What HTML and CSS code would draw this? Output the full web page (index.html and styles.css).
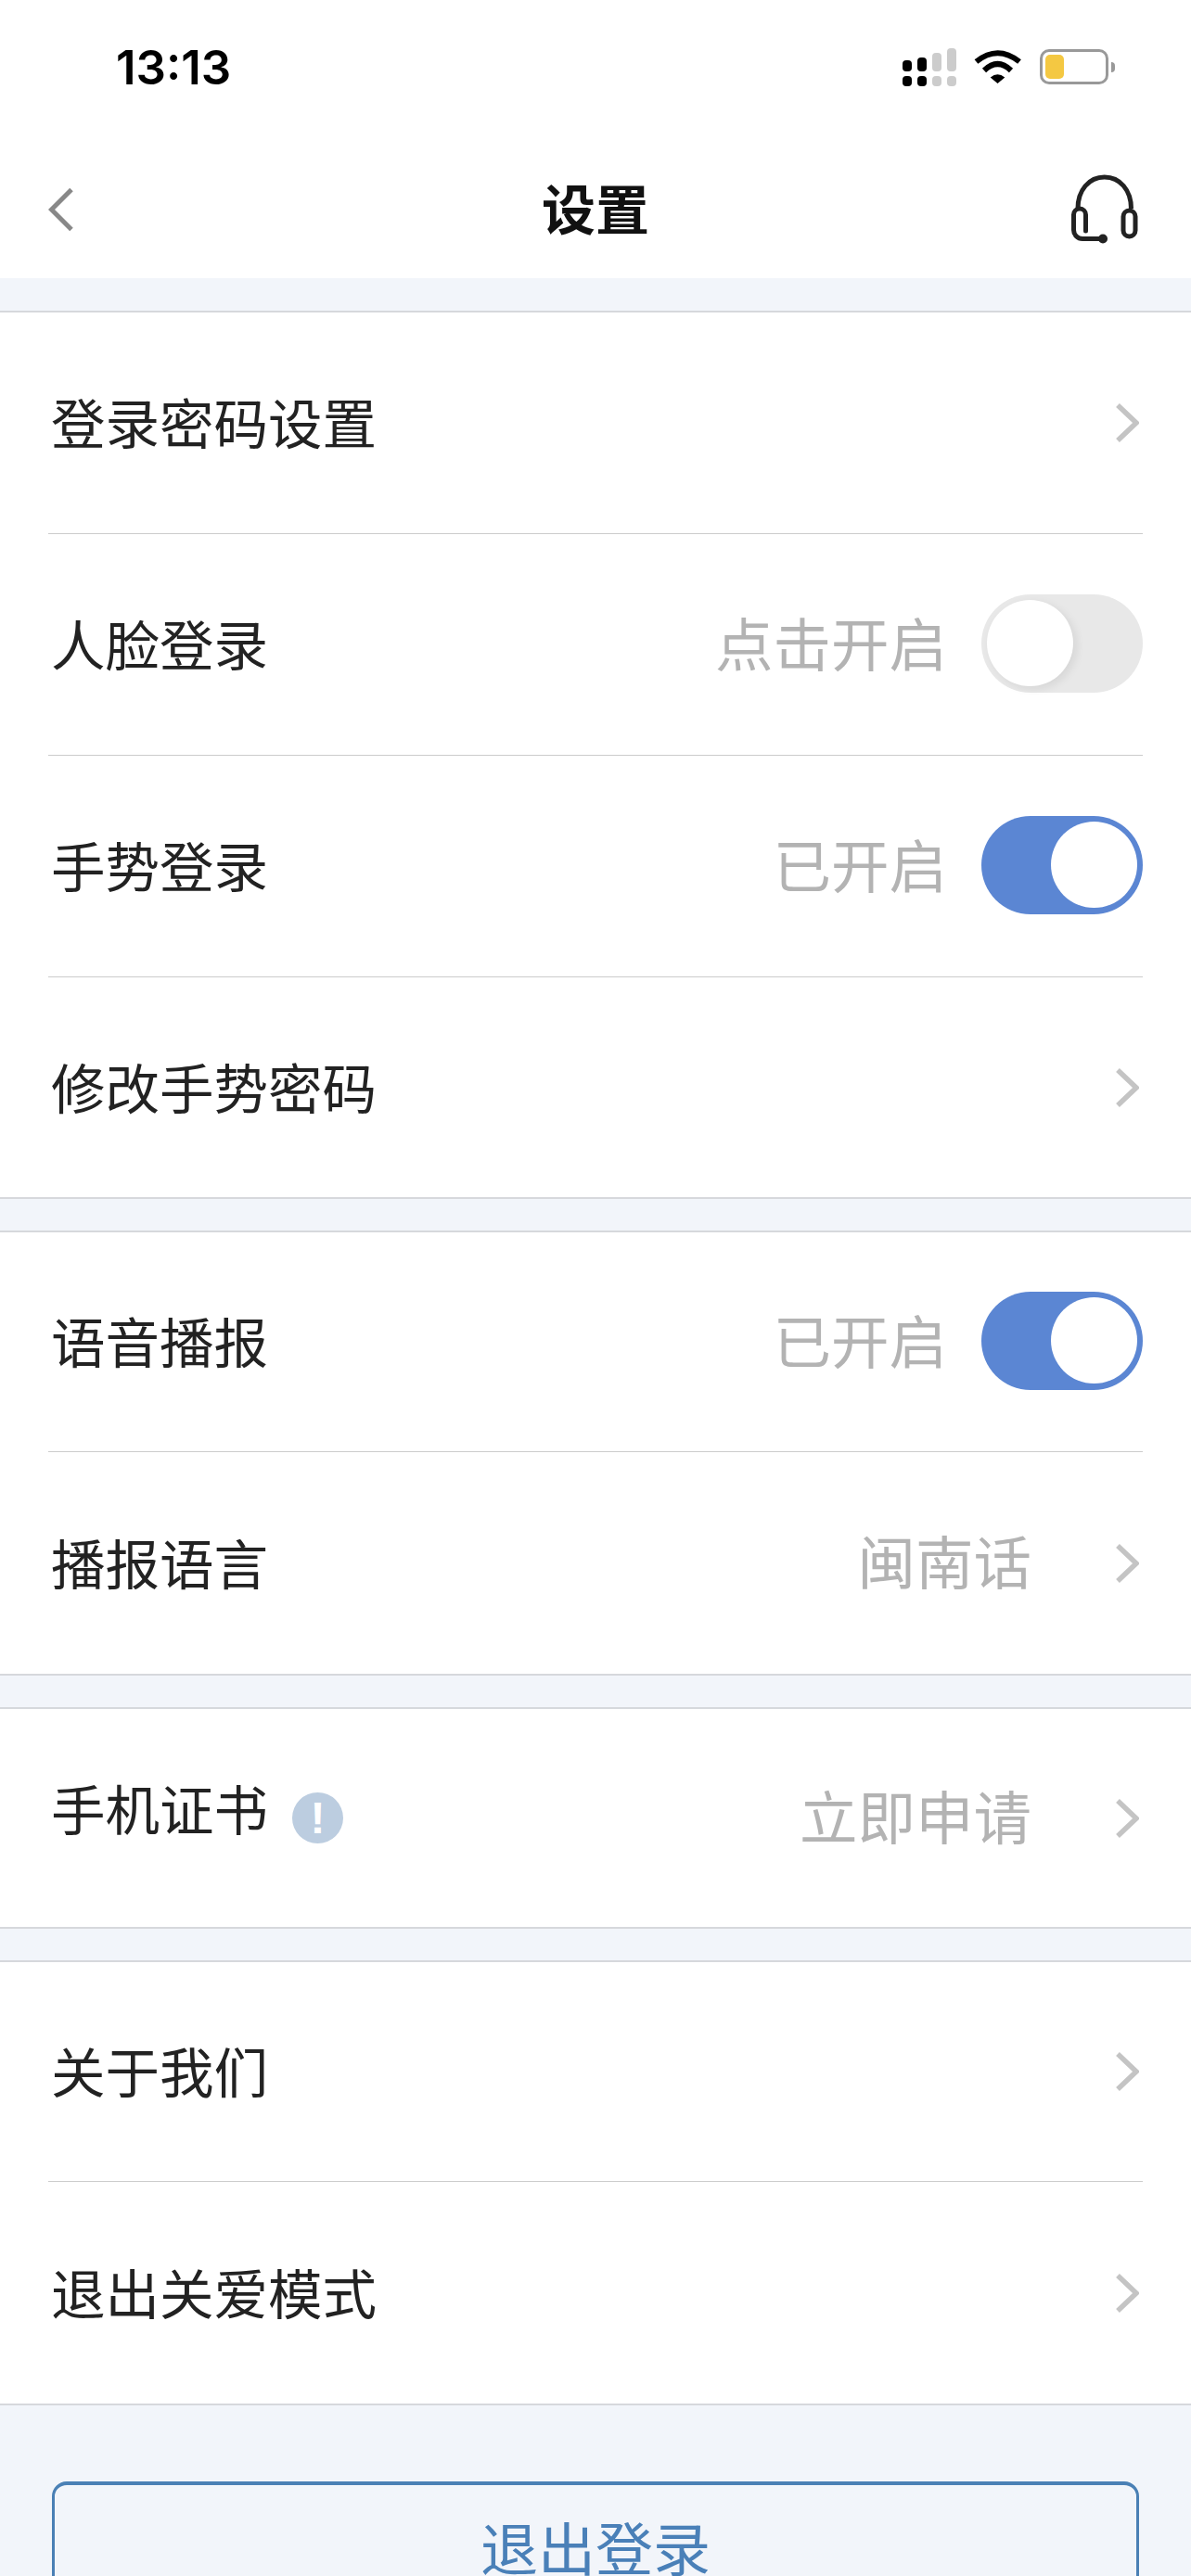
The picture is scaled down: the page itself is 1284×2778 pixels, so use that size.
FILE: index.html
```html
<!DOCTYPE html>
<html lang="zh-CN">

<head>
    <meta charset="UTF-8">
    <meta name="viewport" content="width=device-width, initial-scale=1.0">
    <title>设置</title>
    <link rel="stylesheet" href="styles.css">
</head>

<body>
    <div class="status-bar">
        <div class="time">13:13</div>
        <div class="status-icons">
            <svg class="icon-signal" width="58" height="41" viewBox="0 0 58 41">
                <rect x="0" y="13" width="10" height="12" rx="4" fill="#000" />
                <rect x="16" y="10" width="10" height="15" rx="4" fill="#000" />
                <rect x="32" y="5" width="10" height="20" rx="4" fill="#ccc" />
                <rect x="48" y="0" width="10" height="25" rx="4" fill="#ccc" />
                <rect x="0" y="30" width="10" height="11" rx="4" fill="#000" />
                <rect x="16" y="30" width="10" height="11" rx="4" fill="#000" />
                <rect x="32" y="30" width="10" height="11" rx="4" fill="#ccc" />
                <rect x="48" y="30" width="10" height="11" rx="4" fill="#ccc" />
            </svg>
            <svg class="icon-wifi" width="52" height="38" viewBox="0 0 52 38">
                <path d="M2.5 13.5Q25.5 -5 49 13.5" fill="none" stroke="#000" stroke-width="6" />
                <path d="M11 23Q25.5 9 40 23" fill="none" stroke="#000" stroke-width="6" />
                <path d="M25.5 37L17.7 30.5Q25.5 24 33.3 30.5Z" fill="#000" />
            </svg>
            <div class="battery">
                <div class="battery-body">
                    <div class="battery-level"></div>
                </div>
                <div class="battery-tip"></div>
            </div>
        </div>
    </div>

    <div class="nav-bar">
        <svg class="icon-back" width="28" height="48" viewBox="0 0 28 48">
            <path d="M25 2.5L3.5 24L25 45.5" fill="none" stroke="#888" stroke-width="5" />
        </svg>
        <div class="nav-title">设置</div>
        <svg class="icon-service" width="78" height="78" viewBox="0 0 78 78">
            <path d="M10 38C10 18 22 4 38.7 4S67.5 18 67.5 38" fill="none" stroke="#222" stroke-width="5" />
            <path d="M18.5 62V44.5a6.5 6.5 0 0 0-13 0V61a9.5 9.5 0 0 0 9.5 9.5H37" fill="none" stroke="#222" stroke-width="5" stroke-linecap="round" />
            <rect x="59" y="40" width="13" height="28" rx="6.5" fill="none" stroke="#222" stroke-width="5" />
            <circle cx="37" cy="70.5" r="5" fill="#222" />
        </svg>
    </div>

    <div class="group">
        <div class="row">
            <div class="row-label">登录密码设置</div>
            <svg class="chevron" width="26" height="42" viewBox="0 0 26 42">
                <path d="M3 2L23 21L3 40" fill="none" stroke="#c4c4c4" stroke-width="5.5" />
            </svg>
        </div>
        <div class="row">
            <div class="row-label">人脸登录</div>
            <div class="row-value value-switch">点击开启</div>
            <div class="switch">
                <div class="knob"></div>
            </div>
        </div>
        <div class="row">
            <div class="row-label">手势登录</div>
            <div class="row-value value-switch">已开启</div>
            <div class="switch on">
                <div class="knob"></div>
            </div>
        </div>
        <div class="row">
            <div class="row-label">修改手势密码</div>
            <svg class="chevron" width="26" height="42" viewBox="0 0 26 42">
                <path d="M3 2L23 21L3 40" fill="none" stroke="#c4c4c4" stroke-width="5.5" />
            </svg>
        </div>
    </div>

    <div class="group group-pair">
        <div class="row">
            <div class="row-label">语音播报</div>
            <div class="row-value value-switch">已开启</div>
            <div class="switch on">
                <div class="knob"></div>
            </div>
        </div>
        <div class="row">
            <div class="row-label">播报语言</div>
            <div class="row-value">闽南话</div>
            <svg class="chevron" width="26" height="42" viewBox="0 0 26 42">
                <path d="M3 2L23 21L3 40" fill="none" stroke="#c4c4c4" stroke-width="5.5" />
            </svg>
        </div>
    </div>

    <div class="group group-single">
        <div class="row">
            <div class="row-label label-raised">手机证书</div>
            <div class="alert-badge">!</div>
            <div class="row-value">立即申请</div>
            <svg class="chevron" width="26" height="42" viewBox="0 0 26 42">
                <path d="M3 2L23 21L3 40" fill="none" stroke="#c4c4c4" stroke-width="5.5" />
            </svg>
        </div>
    </div>

    <div class="group group-pair">
        <div class="row">
            <div class="row-label">关于我们</div>
            <svg class="chevron" width="26" height="42" viewBox="0 0 26 42">
                <path d="M3 2L23 21L3 40" fill="none" stroke="#c4c4c4" stroke-width="5.5" />
            </svg>
        </div>
        <div class="row">
            <div class="row-label">退出关爱模式</div>
            <svg class="chevron" width="26" height="42" viewBox="0 0 26 42">
                <path d="M3 2L23 21L3 40" fill="none" stroke="#c4c4c4" stroke-width="5.5" />
            </svg>
        </div>
    </div>

    <div class="logout-wrap">
        <div class="logout-btn">退出登录</div>
    </div>
</body>

</html>
```

FILE: styles.css
```css
html,
body {
    height: 2778px;
    overflow: hidden;
}

body {
    margin: 0;
    font-family: "Noto Sans CJK SC", "Noto Sans", sans-serif;
    background-color: #f2f5fa;
    color: #222;
}

.status-bar {
    display: flex;
    justify-content: space-between;
    align-items: center;
    height: 144px;
    padding: 0 82px 0 125px;
    box-sizing: border-box;
    background-color: #fff;
}

.time {
    font-family: Inter, sans-serif;
    font-size: 51px;
    font-weight: 600;
    color: #000;
}

.status-icons {
    display: flex;
    align-items: center;
    gap: 19px;
}

.battery {
    display: flex;
    align-items: center;
    gap: 3px;
}

.battery-body {
    width: 74px;
    height: 38px;
    padding: 3px;
    box-sizing: border-box;
    border: 3px solid #999;
    border-radius: 10px;
}

.battery-level {
    width: 20px;
    height: 100%;
    background-color: #f4c842;
    border-radius: 5px;
}

.battery-tip {
    width: 4px;
    height: 11px;
    background-color: #999;
    border-radius: 0 5px 5px 0;
}

.nav-bar {
    display: grid;
    grid-template-columns: 1fr auto 1fr;
    align-items: center;
    height: 156px;
    padding: 8px 54px 0 52px;
    box-sizing: border-box;
    background-color: #fff;
    margin-bottom: 35px;
}

.nav-title {
    padding-bottom: 6px;
    padding-left: 2px;
    font-size: 58px;
    font-weight: 700;
    color: #111;
}

.icon-service {
    justify-self: end;
}

.group {
    margin-bottom: 34px;
    background-color: #fff;
    border-top: 2px solid #d6d8dc;
    border-bottom: 2px solid #d6d8dc;
}

.row {
    display: flex;
    align-items: center;
    height: 239px;
    margin: 0 52px;
    box-sizing: border-box;
    border-bottom: 1px solid #ccc;
}

.row:last-child {
    height: 237px;
    border-bottom: none;
}

.group-pair .row:first-child {
    height: 237px;
}

.group-pair .row:last-child {
    height: 239px;
}

.group-single .row:last-child {
    height: 235px;
}

.row-label {
    flex: 1;
    padding-left: 3px;
    padding-bottom: 5px;
    font-size: 58.5px;
    font-weight: 400;
}

.label-raised {
    flex: none;
    padding-bottom: 24px;
}

.row-value {
    padding-bottom: 8px;
    font-size: 62.5px;
    color: #b3b3b3;
    margin-right: 90px;
}

.value-switch {
    margin-right: 37px;
}

.chevron {
    margin-right: 4px;
}

.alert-badge {
    width: 55px;
    height: 55px;
    margin: 0 auto 0 26px;
    border-radius: 50%;
    background-color: #bccde0;
    color: #fff;
    text-align: center;
    font-family: "Liberation Sans", sans-serif;
    font-size: 48px;
    font-weight: 700;
    line-height: 55px;
}

.switch {
    display: flex;
    align-items: center;
    justify-content: flex-start;
    width: 174px;
    height: 106px;
    margin-bottom: 3px;
    padding: 0 6px;
    box-sizing: border-box;
    background-color: #e8e8e8;
    border-radius: 53px;
}

.knob {
    width: 93px;
    height: 93px;
    background-color: #fff;
    border-radius: 50%;
    box-shadow: 4px 3px 10px rgba(0, 0, 0, 0.08);
}

.switch.on {
    justify-content: flex-end;
    background-color: #5b86d3;
}

.switch.on .knob {
    box-shadow: none;
}

.logout-wrap {
    padding: 48px 56px 0 56px;
}

.logout-btn {
    height: 152px;
    box-sizing: border-box;
    border: 3px solid #4a80b5;
    border-top-width: 4px;
    border-radius: 16px;
    color: #4a80b8;
    font-size: 62px;
    line-height: 132px;
    text-align: center;
}
```
